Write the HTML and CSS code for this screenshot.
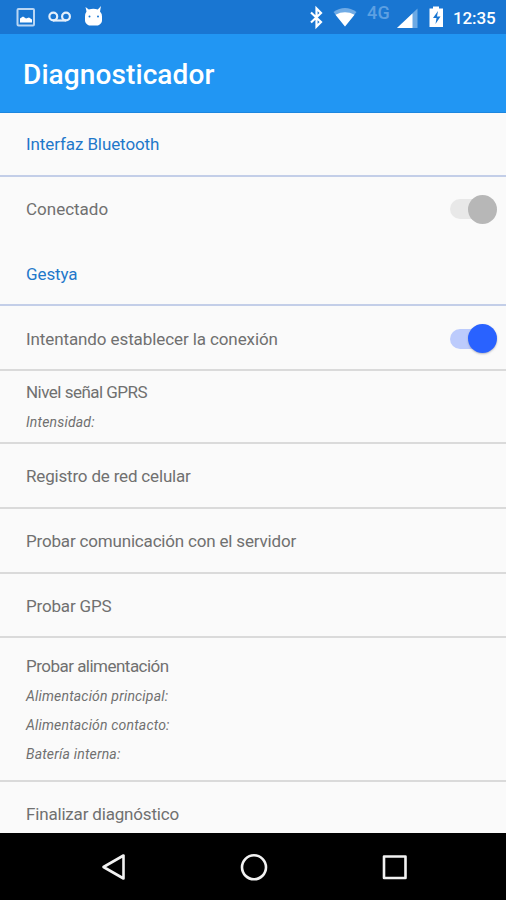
FILE: index.html
```
<!DOCTYPE html>
<html lang="es">
<head>
<meta charset="utf-8">
<title>Diagnosticador</title>
<link rel="stylesheet" href="styles.css">
</head>
<body>
<div class="status">
  <svg class="status-icons" width="150" height="34" viewBox="0 0 150 34">
    <rect x="17.500" y="9" width="16.500" height="16.500" rx="1" fill="none" stroke="#b9d6f4" stroke-width="2"/>
    <path d="M20 22.500v-4l3-2 3 2 3-1 3 2v3z" fill="#fff"/>
    <g fill="none" stroke="#e4effb" stroke-width="2.200"><circle cx="53.300" cy="16.500" r="3.900"/><circle cx="66" cy="16.500" r="3.900"/><path d="M53 20.500h13"/></g>
    <path d="M86.500 11.500l-1-4.500 3.300 2.400q4.500-1.400 9 0l3.200-3.400-1 5.500q2 2 2 5v4q0 3-4 5h-9q-4-2-4-5v-4q0-3 1.500-5z" fill="#fff"/>
    <circle cx="89.500" cy="16.500" r="1" fill="#1976d2"/><circle cx="98" cy="16.500" r="1" fill="#1976d2"/>
  </svg>
  <div class="indicators">
    <svg width="60" height="34" viewBox="0 0 60 34">
      <path d="M3 12.500l10 9.500-4.500 4.500V8.500L13 13 3 22.500" fill="none" stroke="#fff" stroke-width="2.200"/>
      <path d="M25.500 12q11.500-8 23 0L37 26.500z" fill="#70abe5"/>
      <path d="M27.500 14.700q9.500-4.900 19 0L37 26.500z" fill="#fff"/>
    </svg>
    <span class="network">4G</span>
    <svg width="58" height="34" viewBox="0 0 58 34">
      <path d="M4 28L24.500 8.500V28z" fill="#6ca9e4"/>
      <path d="M4 28L19.500 13.500V28z" fill="#fff"/>
      <path d="M36.500 8.500h3.500V6.500h6v2h4V27H36.500z" fill="#fff"/>
      <path d="M45 11l-5 7h3.500l-1 6 5-7.500h-3.500z" fill="#1976d2"/>
    </svg>
    <span class="clock">12:35</span>
  </div>
</div>
<header class="appbar"><h1>Diagnosticador</h1></header>
<main>
  <div class="row section first"><span>Interfaz Bluetooth</span></div>
  <div class="row plain"><span>Conectado</span><i class="switch"></i></div>
  <div class="row section gestya"><span>Gestya</span></div>
  <div class="row connection"><span>Intentando establecer la conexión</span><i class="switch on"></i></div>
  <div class="row signal"><span>Nivel señal GPRS</span><em>Intensidad:</em></div>
  <div class="row"><span>Registro de red celular</span></div>
  <div class="row"><span>Probar comunicación con el servidor</span></div>
  <div class="row gps"><span>Probar GPS</span></div>
  <div class="row power"><span>Probar alimentación</span><em>Alimentación principal:</em><em>Alimentación contacto:</em><em>Batería interna:</em></div>
  <div class="row finish"><span>Finalizar diagnóstico</span></div>
</main>
<nav class="navbar">
  <svg width="506" height="67" viewBox="0 0 506 67" fill="none" stroke="#f2f2f2" stroke-width="2.600" stroke-linejoin="round">
    <path d="M123.500 22.500v23L103.500 34z"/>
    <circle cx="254" cy="34.300" r="12"/>
    <rect x="384" y="23.500" width="21.500" height="21.500"/>
  </svg>
</nav>
</body>
</html>
```
FILE: styles.css
```
* { box-sizing: border-box; }
body {
  margin: 0;
  width: 506px;
  height: 900px;
  display: flex;
  flex-direction: column;
  overflow: hidden;
  background: #fafafa;
  font-family: Roboto, "Liberation Sans", sans-serif;
}
svg { display: block; }
.status {
  height: 34px;
  flex: none;
  display: flex;
  justify-content: space-between;
  background: #1976d2;
  color: #fff;
}
.indicators { display: flex; width: 198px; }
.network {
  width: 26px;
  margin-left: -1px;
  padding-top: 3px;
  font-size: 18px;
  line-height: 20px;
  font-weight: 500;
  letter-spacing: 0.3px;
  color: #5da0e2;
}
.clock {
  margin-left: 2px;
  font-size: 17px;
  line-height: 36px;
  font-weight: 500;
  letter-spacing: -0.1px;
}
.appbar {
  height: 79px;
  flex: none;
  display: flex;
  align-items: center;
  padding-left: 23px;
  background: #2196f3;
  border-bottom: 1px solid #1c86df;
}
h1 {
  margin: 2px 0 0;
  font-size: 28px;
  font-weight: 500;
  letter-spacing: 0.1px;
  color: #fff;
}
main { height: 720px; flex: none; }
.row {
  height: 65px;
  display: flex;
  align-items: center;
  justify-content: space-between;
  padding: 0 9px 0 26px;
  border-bottom: 2px solid #dadada;
  font-size: 17px;
  line-height: 20px;
  letter-spacing: -0.18px;
  color: #707070;
}
.section { color: #1f78ca; border-color: #c3cee8; letter-spacing: -0.1px; }
.first, .plain, .gps { height: 64px; }
.gestya, .gps { padding-top: 2px; }
.plain { border: 0; letter-spacing: 0; }
.connection { padding-top: 2px; letter-spacing: -0.1px; }
.signal, .power {
  flex-direction: column;
  align-items: flex-start;
  justify-content: flex-start;
  letter-spacing: -0.52px;
}
.signal { height: 73px; padding-top: 11px; }
.signal em { margin-top: 10px; }
.power { height: 144px; padding-top: 18px; }
.power em { margin-top: 9px; }
.power span + em { margin-top: 10px; }
.finish { height: 51px; border: 0; padding-top: 13px; }
em { font-size: 14px; letter-spacing: 0.18px; }
.switch {
  width: 47px;
  height: 30px;
  display: flex;
  align-items: center;
}
.switch::before {
  content: "";
  width: 38px;
  height: 20px;
  flex: none;
  border-radius: 10px;
  background: #e8e8e8;
}
.switch::after {
  content: "";
  width: 29px;
  height: 29px;
  margin-left: -20px;
  flex: none;
  border-radius: 50%;
  background: #b7b7b7;
}
.on::before { background: #bccbfc; }
.on::after { background: #2962ff; box-shadow: 0 1px 2px #8899; }
.navbar { height: 67px; flex: none; background: #000; }
```
